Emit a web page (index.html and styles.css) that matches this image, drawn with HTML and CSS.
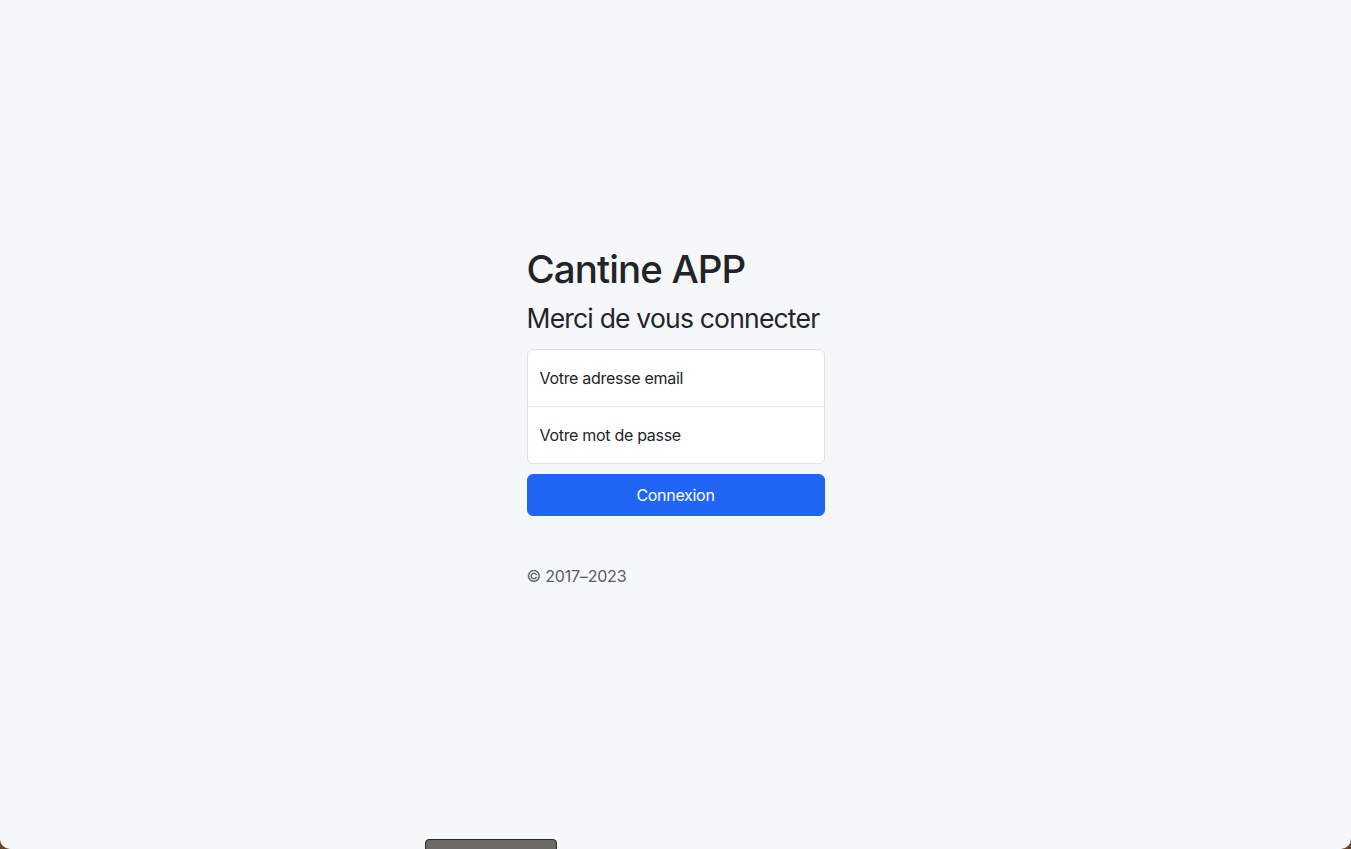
FILE: index.html
```html
<!DOCTYPE html>
<html lang="fr">
<head>
<meta charset="utf-8">
<title>Cantine APP</title>
<link rel="stylesheet" href="styles.css">
</head>
<body>
<div class="window">
  <main class="form-signin">
    <form>
      <h1 class="title">Cantine APP</h1>
      <h3 class="subtitle">Merci de vous connecter</h3>
      <div class="fields">
        <input type="email" class="field field-top" placeholder="Votre adresse email">
        <input type="password" class="field field-bottom" placeholder="Votre mot de passe">
      </div>
      <button class="btn-primary" type="button">Connexion</button>
      <p class="copyright">© 2017–2023</p>
    </form>
  </main>
  <div class="overlay-bar"></div>
</div>
</body>
</html>
```
FILE: styles.css
```css
html, body {
  height: 100%;
  margin: 0;
}
html {
  background: #6b4222;
}
body {
  font-family: Inter, "Noto Sans", "Liberation Sans", sans-serif;
  color: #212529;
}
.window {
  position: relative;
  height: 100%;
  box-sizing: border-box;
  background: #f6f7f9;
  border-radius: 0 0 10px 10px;
  display: flex;
  align-items: center;
  justify-content: center;
  padding: 40px 0;
  overflow: hidden;
}
.form-signin {
  width: 330px;
  padding: 16px;
  box-sizing: border-box;
}
.form-signin form {
  display: flex;
  flex-direction: column;
}
.title {
  margin: 0 0 8px;
  font-size: 38.5px;
  height: 48px;
  font-weight: 500;
  line-height: 48px;
  letter-spacing: -0.9px;
  white-space: nowrap;
}
.subtitle {
  margin: 0 0 15px;
  font-size: 26.5px;
  height: 33.6px;
  font-weight: 400;
  line-height: 35px;
  letter-spacing: -0.8px;
  white-space: nowrap;
}
.fields {
  display: flex;
  flex-direction: column;
}
.field {
  height: 58px;
  box-sizing: border-box;
  padding: 16px 12px;
  font: inherit;
  font-size: 16px;
  border: 1px solid #dee2e6;
  background: #fff;
  color: #212529;
  outline: none;
  letter-spacing: -0.3px;
}
.field::placeholder {
  color: #212529;
  opacity: 1;
}
.field-top {
  border-radius: 6px 6px 0 0;
  margin-bottom: -1px;
}
.field-bottom {
  border-radius: 0 0 6px 6px;
}
.btn-primary {
  margin-top: 10px;
  height: 42px;
  border: 1px solid #1f66f5;
  background: #1f66f5;
  color: #fff;
  font: inherit;
  font-size: 16px;
  font-weight: 400;
  border-radius: 6px;
  letter-spacing: -0.3px;
}
.copyright {
  margin: 48px 0 16px;
  font-size: 16px;
  line-height: 24px;
  color: #595c60;
  letter-spacing: -0.2px;
}
.overlay-bar {
  position: absolute;
  left: 425px;
  top: 839px;
  width: 132px;
  height: 20px;
  box-sizing: border-box;
  background: #6b6a66;
  border: 1px solid #2a2a2a;
  border-radius: 4px;
}
```
